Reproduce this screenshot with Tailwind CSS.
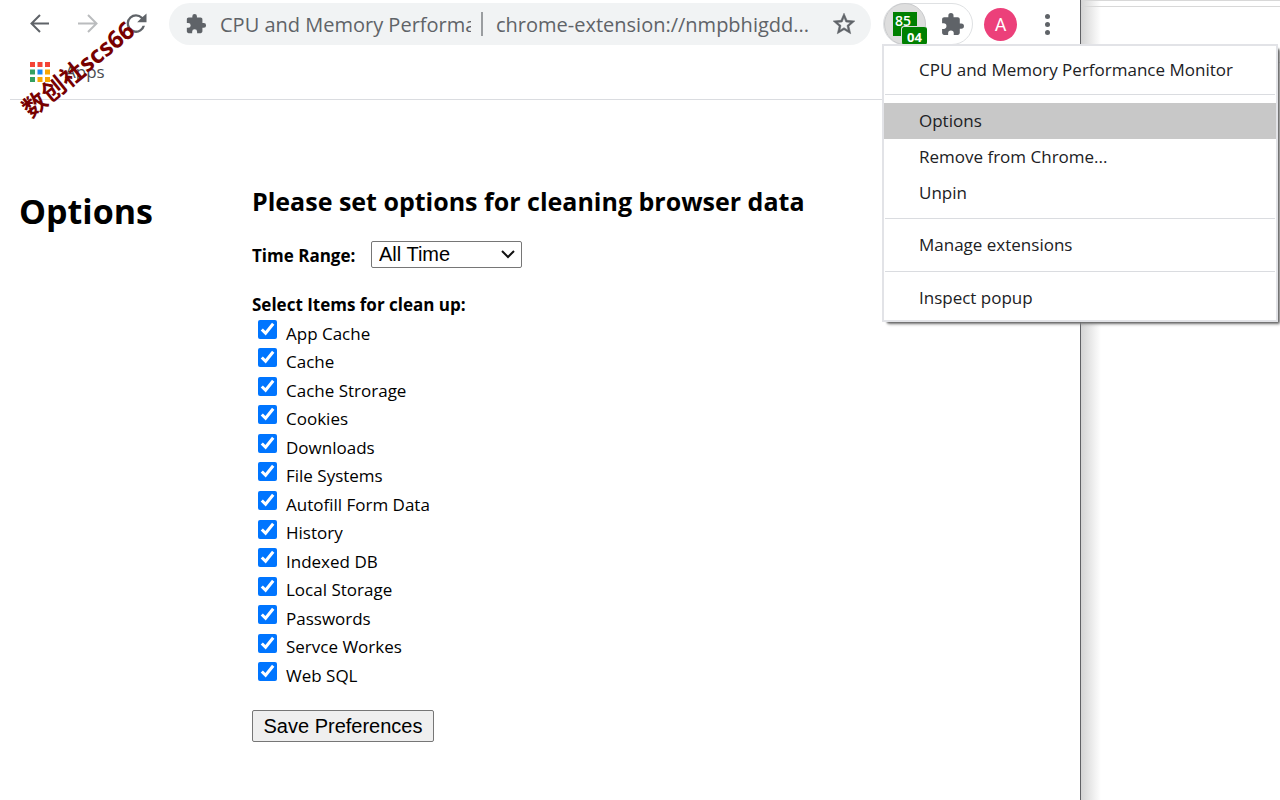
<!DOCTYPE html>
<html lang="en">
<head>
<meta charset="utf-8">
<meta name="viewport" content="width=device-width, initial-scale=1">
<title>CPU and Memory Performance Monitor</title>
<script src="https://cdn.jsdelivr.net/npm/@tailwindcss/browser@4"></script>
</head>
<body class="bg-white text-black font-['Open_Sans','Noto_Sans',sans-serif]">
<div class="relative flex min-h-screen overflow-hidden">
  <div class="min-w-0 flex-1 border-r border-[#606165]">
    <header class="pl-[10px]">
      <div class="flex h-[47px] items-center pt-[1px]">
        <button aria-label="Back" class="ml-[18px] text-[#5f6368]"><svg class="size-6" viewBox="0 0 24 24" fill="none" stroke="currentColor" stroke-width="2"><path d="M21 11.500H3M12 3 3.500 11.500l8.500 8.500"/></svg></button>
        <button aria-label="Forward" class="ml-6 text-[#babcbe]"><svg class="size-6" viewBox="0 0 24 24" fill="none" stroke="currentColor" stroke-width="2"><path d="M2 11.500h18M12 3l8.500 8.500L12 20"/></svg></button>
        <button aria-label="Reload" class="ml-[22px] text-[#5f6368]"><svg class="size-7" viewBox="0 0 24 24" fill="currentColor"><path d="M17.650 5.950A7.960 7.960 0 0 0 12 3.600a8 8 0 1 0 7.730 10h-2.080A6 6 0 1 1 12 5.600c1.660 0 3.140.690 4.220 1.780L13 10.600h8V3.100z"/></svg></button>
        <div class="ml-[19px] flex h-[42px] min-w-0 flex-1 items-center rounded-full bg-[#f1f3f4] pl-4 pr-[14px] text-xl text-[#5f6368]">
          <svg class="size-[22px] shrink-0" viewBox="0 0 24 24" fill="currentColor"><path d="M20.500 11H19V7c0-1.100-.9-2-2-2h-4V3.500a2.500 2.500 0 0 0-5 0V5H4c-1.100 0-1.990.9-1.990 2v3.800H3.500a2.700 2.700 0 0 1 0 5.400H2V20c0 1.100.9 2 2 2h3.800v-1.500a2.700 2.700 0 0 1 5.400 0V22H17c1.100 0 2-.9 2-2v-4h1.500a2.500 2.500 0 0 0 0-5z"/></svg>
          <span class="ml-[13px] w-[251px] shrink-0 overflow-hidden whitespace-nowrap pt-[2px]">CPU and Memory Performa</span>
          <span class="ml-[10px] h-6 w-[2px] shrink-0 bg-[#9a9da0]"></span>
          <span class="ml-[13px] min-w-0 flex-1 whitespace-nowrap pt-[2px]">chrome-extension://nmpbhigdd...</span>
          <button aria-label="Bookmark"><svg class="size-[26px]" viewBox="0 0 24 24" fill="currentColor" stroke="currentColor" stroke-width=".5"><path d="M22 9.240l-7.190-.620L12 2 9.190 8.630 2 9.240l5.460 4.730L5.820 21 12 17.270 18.180 21l-1.630-7.030L22 9.240zM12 15.400l-3.760 2.270 1-4.280-3.320-2.880 4.380-.380L12 6.100l1.710 4.040 4.380.380-3.320 2.880 1 4.280L12 15.400z"/></svg></button>
        </div>
        <div class="ml-3 flex h-[42px] w-[90px] shrink-0 items-center rounded-full border border-[#dfe1e3]">
          <button aria-label="CPU and Memory Performance Monitor" class="relative size-[42px] rounded-full border border-[#c9cacc] bg-[#dedede] font-semibold text-white">
            <span class="absolute left-[8px] top-[8px] h-6 w-6 bg-[#008000] pl-[2px] text-left text-[14px] leading-[18px]">85</span>
            <span class="absolute left-[16px] top-[22px] h-[19px] w-[26px] rounded-[3px] border-l border-t border-[#dedede] bg-[#008000] text-[13px] font-bold leading-[20px]">04</span>
          </button>
          <button aria-label="Extensions" class="ml-[14px] text-[#5f6368]"><svg class="size-[25px]" viewBox="0 0 24 24" fill="currentColor"><path d="M20.500 11H19V7c0-1.100-.9-2-2-2h-4V3.500a2.500 2.500 0 0 0-5 0V5H4c-1.100 0-1.990.9-1.990 2v3.800H3.500a2.700 2.700 0 0 1 0 5.400H2V20c0 1.100.9 2 2 2h3.800v-1.500a2.700 2.700 0 0 1 5.400 0V22H17c1.100 0 2-.9 2-2v-4h1.500a2.500 2.500 0 0 0 0-5z"/></svg></button>
        </div>
        <button class="ml-[11px] size-[33px] shrink-0 rounded-full bg-[#ec407a] font-['Roboto',sans-serif] text-lg leading-[33px] text-white">A</button>
        <button aria-label="Menu" class="ml-5 mr-[22px] flex shrink-0 flex-col gap-[3px] px-2 text-[#5f6368]"><span class="size-[5px] rounded-full bg-current"></span><span class="size-[5px] rounded-full bg-current"></span><span class="size-[5px] rounded-full bg-current"></span></button>
      </div>
      <div class="flex h-[53px] items-center border-b border-[#dadce0] pb-[3px] pl-5">
        <svg class="size-5" viewBox="0 0 20 20"><path fill="#f44336" d="M0 0h5v5H0zM7.500 0h5v5h-5zM15 0h5v5h-5z"/><path fill="#34a060" d="M0 7.500h5v5H0zM0 15h5v5H0z"/><path fill="#1e88f0" d="M7.500 7.500h5v5h-5z"/><path fill="#f9a602" d="M15 7.500h5v5h-5zM7.500 15h5v5h-5zM15 15h5v5h-5z"/></svg>
        <a href="#" class="ml-[15px] text-[17px] text-[#4a4d51]">Apps</a>
      </div>
    </header>
    <main class="flex pl-[19px] pt-[83px]">
      <h1 class="w-[233px] shrink-0 pt-[4px] text-[34px] font-bold leading-[48px]">Options</h1>
      <form class="min-w-0 flex-1">
        <h2 class="text-[25px] font-bold leading-9">Please set options for cleaning browser data</h2>
        <div class="mt-[22px] flex items-center">
          <label for="range" class="w-[119px] pt-[2px] text-[17px] font-bold leading-6">Time Range:</label>
          <div class="relative">
            <select id="range" class="h-[27px] w-[151px] appearance-none rounded-[2px] border border-[#767676] bg-white pb-[2px] pl-[7px] font-['Liberation_Sans',Arial,sans-serif] text-xl leading-6"><option>All Time</option></select>
            <svg class="pointer-events-none absolute right-[6px] top-[8px] h-[10px] w-4" viewBox="0 0 16 10" fill="none" stroke="#111" stroke-width="2"><path d="M2 2l6 6 6-6"/></svg>
          </div>
        </div>
        <fieldset class="mt-6">
          <legend class="text-[17px] font-bold leading-[26px]">Select Items for clean up:</legend>
          <div class="grid h-[372px] auto-rows-fr pl-[6px] pt-px text-[17px]">
            <label class="flex items-center gap-[9px]"><input type="checkbox" checked class="mb-2 size-[19px] accent-[#0075ff]">App Cache</label>
            <label class="flex items-center gap-[9px]"><input type="checkbox" checked class="mb-2 size-[19px] accent-[#0075ff]">Cache</label>
            <label class="flex items-center gap-[9px]"><input type="checkbox" checked class="mb-2 size-[19px] accent-[#0075ff]">Cache Strorage</label>
            <label class="flex items-center gap-[9px]"><input type="checkbox" checked class="mb-2 size-[19px] accent-[#0075ff]">Cookies</label>
            <label class="flex items-center gap-[9px]"><input type="checkbox" checked class="mb-2 size-[19px] accent-[#0075ff]">Downloads</label>
            <label class="flex items-center gap-[9px]"><input type="checkbox" checked class="mb-2 size-[19px] accent-[#0075ff]">File Systems</label>
            <label class="flex items-center gap-[9px]"><input type="checkbox" checked class="mb-2 size-[19px] accent-[#0075ff]">Autofill Form Data</label>
            <label class="flex items-center gap-[9px]"><input type="checkbox" checked class="mb-2 size-[19px] accent-[#0075ff]">History</label>
            <label class="flex items-center gap-[9px]"><input type="checkbox" checked class="mb-2 size-[19px] accent-[#0075ff]">Indexed DB</label>
            <label class="flex items-center gap-[9px]"><input type="checkbox" checked class="mb-2 size-[19px] accent-[#0075ff]">Local Storage</label>
            <label class="flex items-center gap-[9px]"><input type="checkbox" checked class="mb-2 size-[19px] accent-[#0075ff]">Passwords</label>
            <label class="flex items-center gap-[9px]"><input type="checkbox" checked class="mb-2 size-[19px] accent-[#0075ff]">Servce Workes</label>
            <label class="flex items-center gap-[9px]"><input type="checkbox" checked class="mb-2 size-[19px] accent-[#0075ff]">Web SQL</label>
          </div>
        </fieldset>
        <button type="button" class="mt-5 h-8 w-[182px] rounded-[2px] border border-[#767676] bg-[#efefef] font-['Liberation_Sans',Arial,sans-serif] text-xl leading-6">Save Preferences</button>
      </form>
    </main>
  </div>
  <aside class="w-[199px] shrink-0 bg-linear-to-r from-[#d4d4d4] via-white via-10% to-white">
    <div class="h-[7px] border-y border-[#d8d8d8]"></div>
    <div class="h-[56px] border-b border-[#c8c8c8]"></div>
  </aside>

  <nav aria-label="Extension menu" class="absolute right-[2px] top-[44px] w-[396px] border-2 border-[#e2e3e7] bg-white pb-1 text-[17px] leading-9 text-[#202124] shadow-[3px_3px_2px_-2px_#606060,4px_4px_3px_-2px_#909090]">
    <a href="#" class="block pt-[6px] pb-[6px] pl-[35px]">CPU and Memory Performance Monitor</a>
    <hr class="mx-px mb-2 border-[#dadce0]">
    <a href="#" class="block bg-[#c8c8c8] pl-[35px]">Options</a>
    <a href="#" class="block pl-[35px]">Remove from Chrome...</a>
    <a href="#" class="block pl-[35px]">Unpin</a>
    <hr class="mx-px mt-[7px] mb-2 border-[#dadce0]">
    <a href="#" class="block pl-[35px]">Manage extensions</a>
    <hr class="mx-px my-2 border-[#dadce0]">
    <a href="#" class="block pl-[35px]">Inspect popup</a>
  </nav>
  <div class="pointer-events-none absolute left-[33px] top-[97px] origin-bottom-left -rotate-[39deg] whitespace-nowrap font-['Open_Sans','Noto_Sans_CJK_SC',sans-serif] text-[24px] font-bold leading-6 text-[#780000]">数创社scs66</div>
</div>
</body>
</html>
